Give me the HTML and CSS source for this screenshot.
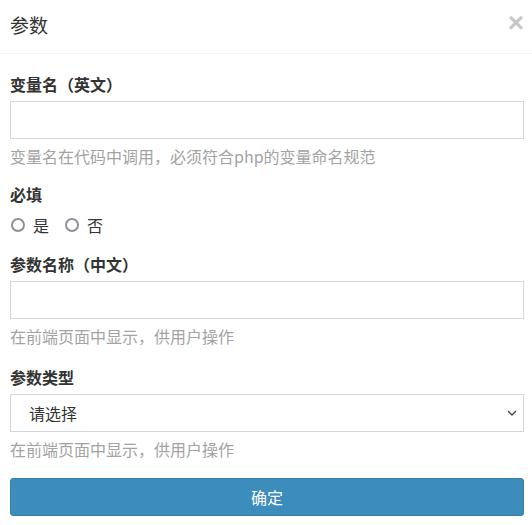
FILE: index.html
```html
<!DOCTYPE html>
<html lang="zh-CN">
<head>
<meta charset="utf-8">
<title>参数</title>
<link rel="stylesheet" href="styles.css">
</head>
<body>
<div class="modal">
  <div class="modal-header">
    <h4 class="modal-title">参数</h4>
    <button class="close" type="button" aria-label="关闭">×</button>
  </div>
  <form class="modal-body">
    <div class="form-group group-name">
      <label class="control-label">变量名（英文）</label>
      <input class="form-control" type="text">
      <p class="help-block">变量名在代码中调用，必须符合php的变量命名规范</p>
    </div>
    <div class="form-group radio-group">
      <label class="control-label">必填</label>
      <div class="radio-row">
        <span class="radio-item"><span class="radio-circle"></span><span>是</span></span>
        <span class="radio-item"><span class="radio-circle"></span><span>否</span></span>
      </div>
    </div>
    <div class="form-group group-title">
      <label class="control-label">参数名称（中文）</label>
      <input class="form-control" type="text">
      <p class="help-block">在前端页面中显示，供用户操作</p>
    </div>
    <div class="form-group">
      <label class="control-label">参数类型</label>
      <div class="select-wrap">
        <select class="form-control select">
          <option>请选择</option>
        </select>
        <svg class="chevron" width="10" height="6" viewBox="0 0 10 6"><path d="M1 1l4 4 4-4" fill="none" stroke="#444" stroke-width="1.4"/></svg>
      </div>
      <p class="help-block">在前端页面中显示，供用户操作</p>
    </div>
    <button class="btn-primary" type="button">确定</button>
  </form>
</div>
</body>
</html>
```

FILE: styles.css
```css
* { box-sizing: border-box; }
html, body {
  margin: 0;
  padding: 0;
  background: #fff;
}
body {
  font-family: "Noto Sans CJK SC", "Microsoft YaHei", sans-serif;
  font-size: 16px;
  color: #333;
}
.modal {
  width: 532px;
}
.modal-header {
  display: flex;
  justify-content: space-between;
  align-items: center;
  height: 54px;
  padding: 0 8px 4px 10px;
  border-bottom: 1px solid #f4f4f4;
}
.modal-title {
  margin: 0;
  font-size: 19px;
  font-weight: normal;
  line-height: 25px;
  color: #333;
}
.close {
  border: 0;
  background: transparent;
  padding: 0;
  margin: 0 0 4px 0;
  font-family: "Liberation Sans", Arial, sans-serif;
  font-size: 28px;
  font-weight: bold;
  line-height: 1;
  color: #000;
  opacity: 0.22;
}
.modal-body {
  display: block;
  margin: 0;
  padding: 20px 8px 0 10px;
}
.form-group {
  margin-bottom: 19px;
}
.group-name {
  margin-bottom: 18px;
}
.radio-group {
  margin-bottom: 15px;
}
.group-title {
  margin-bottom: 21px;
}
.control-label {
  display: block;
  font-weight: bold;
  line-height: 20px;
  margin-bottom: 7px;
  color: #333;
}
.form-control {
  display: block;
  width: 100%;
  height: 38px;
  margin: 0;
  border: 1px solid #d2d6de;
  border-radius: 0;
  background: #fff;
  font-family: inherit;
  font-size: 16px;
  color: #555;
  padding: 0 12px;
  outline: none;
}
.help-block {
  margin: 7px 0 0;
  line-height: 20px;
  color: #a3a3a3;
}
.radio-row {
  display: flex;
  align-items: center;
  height: 28px;
  padding-left: 1px;
}
.radio-item {
  display: flex;
  align-items: center;
  margin-right: 16px;
  line-height: 20px;
}
.radio-circle {
  width: 14px;
  height: 14px;
  border: 2px solid #8f8f99;
  border-radius: 50%;
  margin-right: 8px;
}
.select-wrap {
  position: relative;
}
.select {
  appearance: none;
  -webkit-appearance: none;
  padding-left: 18px;
  color: #333;
}
.chevron {
  position: absolute;
  right: 7px;
  top: 16px;
}
.btn-primary {
  display: block;
  width: 100%;
  height: 38px;
  border: 1px solid #367fa9;
  border-radius: 3px;
  background: #3c8dbc;
  color: #fff;
  font-family: inherit;
  font-size: 16px;
  padding: 0;
}
```
